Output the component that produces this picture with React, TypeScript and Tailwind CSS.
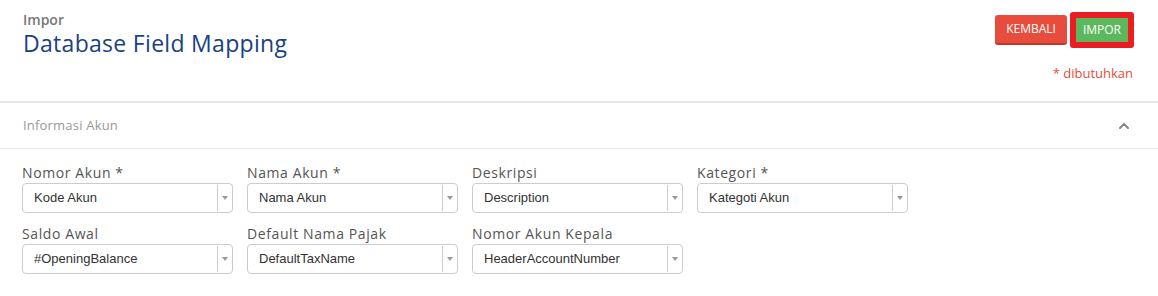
import { ChevronUp } from 'lucide-react';

const FIELDS = [
  { label: 'Nomor Akun *', value: 'Kode Akun' },
  { label: 'Nama Akun *', value: 'Nama Akun' },
  { label: 'Deskripsi', value: 'Description' },
  { label: 'Kategori *', value: 'Kategoti Akun' },
  { label: 'Saldo Awal', value: '#OpeningBalance' },
  { label: 'Default Nama Pajak', value: 'DefaultTaxName' },
  { label: 'Nomor Akun Kepala', value: 'HeaderAccountNumber' },
];

const SelectField = ({ label, value }: { label: string; value: string }) => (
  <div className="flex flex-col">
    <label className="text-[14px] leading-[18px] text-[#555] tracking-[0.6px]">{label}</label>
    <div className="mt-[1px] h-[30px] flex items-stretch border border-[#ccc] rounded-[4px] bg-white">
      <div className="flex-1 flex items-center pl-[11px] text-[13px] text-[#333] font-['Liberation_Sans',Arial,sans-serif]">
        {value}
      </div>
      <div className="w-[15px] my-[1px] border-l border-[#ccc] flex items-center justify-center">
        <span className="w-0 h-0 border-l-[3px] border-r-[3px] border-t-[4px] border-l-transparent border-r-transparent border-t-[#999]" />
      </div>
    </div>
  </div>
);

export default function App() {
  return (
    <div className="w-[1158px] h-[296px] bg-white font-['Open_Sans',sans-serif] overflow-hidden">
      {/* Page header */}
      <div className="h-[101px] flex justify-between pl-[23px] pr-[24px] pt-[12px]">
        <div>
          <div className="text-[14px] leading-[16px] font-semibold text-[#777]">Impor</div>
          <h1 className="text-[23px] leading-[30px] tracking-[0.3px] text-[#1a4282]">Database Field Mapping</h1>
        </div>
        <div className="flex flex-col items-end">
          <div className="flex items-center gap-[3px]">
            <button className="h-[30px] px-[11px] bg-[#e74c3c] border-b-2 border-[#c0392b] rounded-[3px] text-white text-[12px]">
              KEMBALI
            </button>
            <button className="h-[36px] p-[6px] bg-[#ec1c24] rounded-[3px]">
              <span className="h-full flex items-center px-[7px] bg-[#5cb85c] text-white text-[12px]">IMPOR</span>
            </button>
          </div>
          <div className="mt-[16px] mr-[1px] text-[13px] text-[#e74c3c]">* dibutuhkan</div>
        </div>
      </div>

      {/* Section */}
      <div className="border-t-2 border-[#e6e6e6]">
        <div className="h-[46px] flex items-center justify-between pl-[23px] pr-[26px] border-b border-[#e8e8e8]">
          <span className="text-[13px] tracking-[0.2px] text-[#999]">Informasi Akun</span>
          <ChevronUp size={16} strokeWidth={3} className="text-[#888]" />
        </div>
        <div className="grid grid-cols-[211px_211px_211px_211px] gap-x-[14px] gap-y-[12px] pl-[22px] pt-[15px]">
          {FIELDS.map((f) => (
            <SelectField key={f.label} label={f.label} value={f.value} />
          ))}
        </div>
      </div>
    </div>
  );
}
